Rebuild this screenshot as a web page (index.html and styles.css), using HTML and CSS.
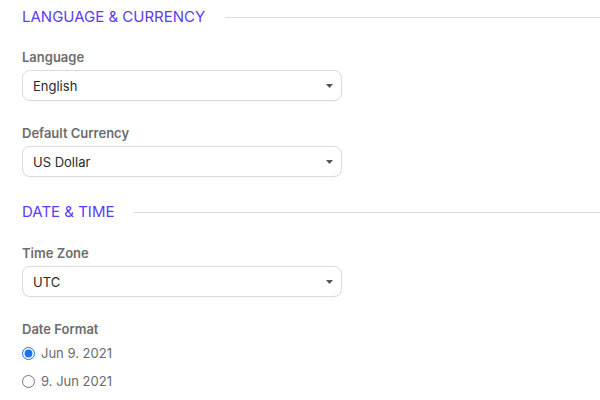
FILE: index.html
```html
<!DOCTYPE html>
<html>
<head>
<meta charset="utf-8">
<link rel="stylesheet" href="styles.css">
</head>
<body>
<div class="page">
  <div class="section-head"><h2>LANGUAGE &amp; CURRENCY</h2><div class="rule"></div></div>
  <div class="field">
    <div class="label">Language</div>
    <div class="select"><span>English</span><svg width="7" height="4" viewBox="0 0 7 4"><path d="M0 0H7L3.5 4Z" fill="#555"/></svg></div>
  </div>
  <div class="field">
    <div class="label">Default Currency</div>
    <div class="select"><span>US Dollar</span><svg width="7" height="4" viewBox="0 0 7 4"><path d="M0 0H7L3.5 4Z" fill="#555"/></svg></div>
  </div>
  <div class="section-head second"><h2>DATE &amp; TIME</h2><div class="rule"></div></div>
  <div class="field">
    <div class="label">Time Zone</div>
    <div class="select"><span>UTC</span><svg width="7" height="4" viewBox="0 0 7 4"><path d="M0 0H7L3.5 4Z" fill="#555"/></svg></div>
  </div>
  <div class="field">
    <div class="label">Date Format</div>
    <div class="radios">
      <label class="radio"><input type="radio" name="df" checked><span>Jun 9. 2021</span></label>
      <label class="radio"><input type="radio" name="df"><span>9. Jun 2021</span></label>
    </div>
  </div>
</div>
</body>
</html>
```
FILE: styles.css
```css
html, body {
  margin: 0;
  padding: 0;
  background: #fff;
}
body {
  font-family: Inter, "Liberation Sans", sans-serif;
  -webkit-font-smoothing: antialiased;
}
.page {
  padding: 8px 0 0 22px;
}
.section-head {
  display: flex;
  align-items: center;
  gap: 20px;
  margin-bottom: 23px;
}
.section-head.second {
  margin-top: 26px;
  margin-bottom: 24px;
}
.section-head h2 {
  margin: 0;
  font-size: 15px;
  line-height: 18px;
  font-weight: 400;
  color: #5a3df2;
  white-space: nowrap;
}
.rule {
  flex: 1;
  height: 1px;
  background: #dcdcdc;
}
.field {
  margin-bottom: 24px;
  width: 320px;
}
.label {
  font-size: 13px;
  line-height: 16px;
  font-weight: 600;
  color: #6d6d6d;
  margin-bottom: 5px;
}
.select {
  box-sizing: border-box;
  height: 31px;
  border: 1px solid #dadada;
  border-radius: 8px;
  padding: 0 8px 0 10px;
  display: flex;
  align-items: center;
  justify-content: space-between;
  font-size: 13px;
  color: #2b2b2b;
  box-shadow: 0 1px 1px rgba(0,0,0,0.03);
}
.radios {
  display: flex;
  flex-direction: column;
  gap: 12px;
  padding-top: 3px;
}
.radio {
  display: flex;
  align-items: center;
  gap: 6px;
  font-size: 13px;
  line-height: 16px;
  color: #6a6a6a;
}
.radio input {
  margin: 0;
  width: 13px;
  height: 13px;
  accent-color: #1f6fef;
}
```
